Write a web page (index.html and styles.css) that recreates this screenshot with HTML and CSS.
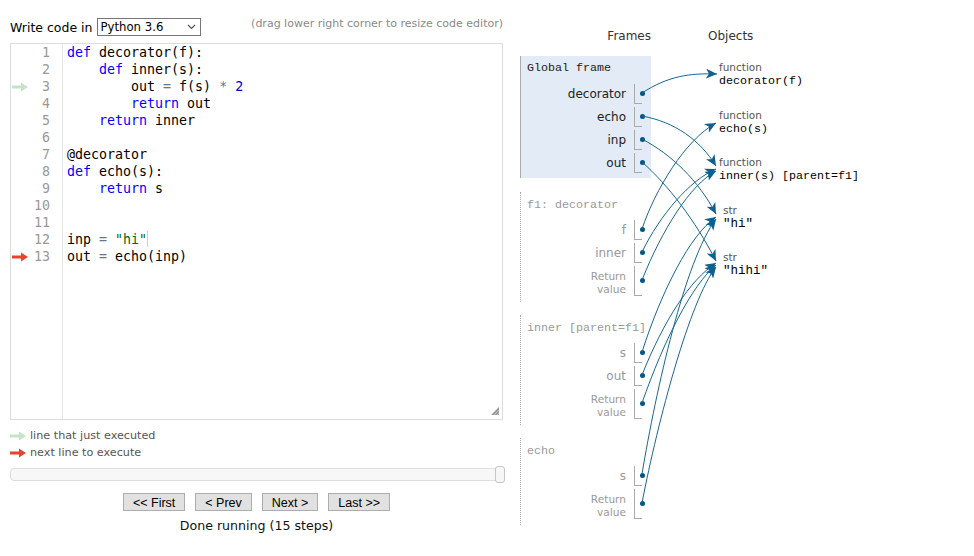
FILE: index.html
```html
<!DOCTYPE html>
<html>
<head>
<meta charset="utf-8">
<link rel="stylesheet" href="styles.css">
</head>
<body>
<div class="page">
  <div class="left">
    <div class="top-row">
      <div class="lang">
        <span>Write code in</span>
        <div class="select"><span>Python 3.6</span><svg class="chev" width="9" height="6" viewBox="0 0 9 6"><path d="M1 1 L4.5 4.5 L8 1" fill="none" stroke="#555" stroke-width="1.2"/></svg></div>
      </div>
      <span class="hint">(drag lower right corner to resize code editor)</span>
    </div>
    <div class="editor">
      <div class="gutter">
        <div class="gl"><span></span><span>1</span></div>
        <div class="gl"><span></span><span>2</span></div>
        <div class="gl"><svg class="arrow" width="16" height="10" viewBox="0 0 16 10"><rect x="0" y="3.5" width="9" height="3" fill="#c5e3c5"/><polygon points="9,0.5 16,5 9,9.5" fill="#c5e3c5"/></svg><span>3</span></div>
        <div class="gl"><span></span><span>4</span></div>
        <div class="gl"><span></span><span>5</span></div>
        <div class="gl"><span></span><span>6</span></div>
        <div class="gl"><span></span><span>7</span></div>
        <div class="gl"><span></span><span>8</span></div>
        <div class="gl"><span></span><span>9</span></div>
        <div class="gl"><span></span><span>10</span></div>
        <div class="gl"><span></span><span>11</span></div>
        <div class="gl"><span></span><span>12</span></div>
        <div class="gl"><svg class="arrow" width="16" height="10" viewBox="0 0 16 10"><rect x="0" y="3.5" width="9" height="3" fill="#e8432f"/><polygon points="9,0.5 16,5 9,9.5" fill="#e8432f"/></svg><span>13</span></div>
      </div>
      <div class="code"><div class="cl"><span class="kw">def</span> decorator(f):</div><div class="cl">    <span class="kw">def</span> inner(s):</div><div class="cl">        out <span class="op">=</span> f(s) <span class="op">*</span> <span class="num">2</span></div><div class="cl">        <span class="kw">return</span> out</div><div class="cl">    <span class="kw">return</span> inner</div><div class="cl"> </div><div class="cl">@decorator</div><div class="cl"><span class="kw">def</span> echo(s):</div><div class="cl">    <span class="kw">return</span> s</div><div class="cl"> </div><div class="cl"> </div><div class="cl">inp <span class="op">=</span> <span class="str">"hi"</span><span class="cursor"></span></div><div class="cl">out <span class="op">=</span> echo(inp)</div></div>
      <svg class="resize" width="8" height="8" viewBox="0 0 8 8"><polygon points="8,0 8,8 0,8" fill="#999"/><path d="M3 8 L8 3 M6 8 L8 6" stroke="#ccc" stroke-width="0.8"/></svg>
    </div>
    <div class="legend">
      <div class="leg-row"><svg width="16" height="10" viewBox="0 0 16 10"><rect x="0" y="3.5" width="9" height="3" fill="#c5e3c5"/><polygon points="9,0.5 16,5 9,9.5" fill="#c5e3c5"/></svg><span>line that just executed</span></div>
      <div class="leg-row"><svg width="16" height="10" viewBox="0 0 16 10"><rect x="0" y="3.5" width="9" height="3" fill="#e8432f"/><polygon points="9,0.5 16,5 9,9.5" fill="#e8432f"/></svg><span>next line to execute</span></div>
    </div>
    <div class="slider"><div class="handle"></div></div>
    <div class="buttons">
      <button class="btn">&lt;&lt; First</button>
      <button class="btn">&lt; Prev</button>
      <button class="btn">Next &gt;</button>
      <button class="btn">Last &gt;&gt;</button>
    </div>
    <div class="status">Done running (15 steps)</div>
  </div>

  <div class="right">
    <div class="viz-head"><span class="h-frames">Frames</span><span class="h-objects">Objects</span></div>
    <div class="viz">
      <div class="frames">
        <div class="frame global">
          <div class="ftitle">Global frame</div>
          <div class="var"><span class="vname">decorator</span><span class="vbox"></span></div>
          <div class="var"><span class="vname">echo</span><span class="vbox"></span></div>
          <div class="var"><span class="vname">inp</span><span class="vbox"></span></div>
          <div class="var"><span class="vname">out</span><span class="vbox"></span></div>
        </div>
        <div class="frame">
          <div class="ftitle">f1: decorator</div>
          <div class="var"><span class="vname">f</span><span class="vbox"></span></div>
          <div class="var"><span class="vname">inner</span><span class="vbox"></span></div>
          <div class="var"><span class="vname ret">Return<br>value</span><span class="vbox tall"></span></div>
        </div>
        <div class="frame">
          <div class="ftitle">inner [parent=f1]</div>
          <div class="var"><span class="vname">s</span><span class="vbox"></span></div>
          <div class="var"><span class="vname">out</span><span class="vbox"></span></div>
          <div class="var"><span class="vname ret">Return<br>value</span><span class="vbox tall"></span></div>
        </div>
        <div class="frame">
          <div class="ftitle">echo</div>
          <div class="var"><span class="vname">s</span><span class="vbox"></span></div>
          <div class="var"><span class="vname ret">Return<br>value</span><span class="vbox tall"></span></div>
        </div>
      </div>
      <div class="objects">
        <div class="obj fn"><div class="olabel">function</div><div class="oval">decorator(f)</div></div>
        <div class="obj fn gap21"><div class="olabel">function</div><div class="oval">echo(s)</div></div>
        <div class="obj fn gap20"><div class="olabel">function</div><div class="oval">inner(s) [parent=f1]</div></div>
        <div class="obj st gap21"><div class="olabel">str</div><div class="oval sval">"hi"</div></div>
        <div class="obj st gap20"><div class="olabel">str</div><div class="oval sval">"hihi"</div></div>
      </div>
    </div>
  </div>

  <svg class="arrows" width="974" height="556" viewBox="0 0 974 556">
    <defs>
      <marker id="ah" markerWidth="12" markerHeight="10" refX="11" refY="5" orient="auto" markerUnits="userSpaceOnUse">
        <path d="M0,0 L11,5 L0,10 L3,5 Z" fill="#0f5f8f"/>
      </marker>
    </defs>
    <g fill="none" stroke="#1a6593" stroke-width="1" marker-end="url(#ah)">
      <path d="M642,93 C668,76 690,73 717,74"/>
      <path d="M642,116 C675,122 700,140 716,166"/>
      <path d="M642,139 C672,155 698,180 716,214"/>
      <path d="M642,162 C668,185 695,220 716,261"/>
      <path d="M642,229 C655,190 685,140 716,123"/>
      <path d="M642,252 C660,215 690,180 716,169"/>
      <path d="M642,280 C662,230 690,185 716,171"/>
      <path d="M642,352 C662,290 690,235 716,217"/>
      <path d="M642,375 C664,320 690,280 716,263"/>
      <path d="M642,403 C664,340 692,285 716,265"/>
      <path d="M642,474 C656,390 685,260 716,219"/>
      <path d="M642,503 C658,420 690,300 716,267"/>
    </g>
  </svg>
</div>
</body>
</html>
```

FILE: styles.css
```css
body {
  margin: 0;
  font-family: "DejaVu Sans", Verdana, sans-serif;
  color: #000;
  background: #fff;
}

.page {
  position: relative;
  display: flex;
  width: 974px;
  height: 556px;
}

.left {
  flex: none;
  width: 495px;
  padding: 18px 0 0 10px;
}

.top-row {
  display: flex;
  justify-content: space-between;
  width: 493px;
  height: 18px;
}

.lang {
  display: flex;
  align-items: center;
  gap: 4px;
  font-size: 12.5px;
  padding-top: 1px;
}

.select {
  width: 104px;
  height: 18px;
  box-sizing: border-box;
  border: 1px solid #767676;
  display: flex;
  align-items: center;
  justify-content: space-between;
  padding: 0 4px 0 3px;
  font-size: 11.7px;
  background: #fff;
  margin-top: -1px;
}

.hint {
  font-size: 11px;
  line-height: 12px;
  color: #8a8a8a;
}

.editor {
  position: relative;
  margin-top: 7px;
  width: 493px;
  height: 377px;
  box-sizing: border-box;
  border: 1px solid #dcdcdc;
  display: flex;
  font-family: "DejaVu Sans Mono", monospace;
  font-size: 13.3px;
  line-height: 17px;
}

.gutter {
  flex: none;
  width: 52px;
  box-sizing: border-box;
  border-right: 1px solid #e6e6e6;
  padding: 0 12px 0 1px;
  color: #999;
}

.gl {
  display: flex;
  justify-content: space-between;
  align-items: center;
  height: 17px;
}

.code {
  padding-left: 4px;
  white-space: pre;
}

.cl {
  height: 17px;
}

.kw { color: #0000ff; }
.num { color: #0000cd; }
.str { color: #036a07; }
.op { color: #687687; }

.cursor {
  display: inline-block;
  width: 0;
  height: 16px;
  border-left: 1px solid #cfcfcf;
  vertical-align: top;
}

.resize {
  position: absolute;
  right: 3px;
  bottom: 4px;
}

.legend {
  margin-top: 7px;
  font-size: 11.2px;
  color: #555;
}

.leg-row {
  display: flex;
  align-items: center;
  gap: 4px;
  height: 17px;
}

.slider {
  position: relative;
  margin-top: 7px;
  height: 13px;
  box-sizing: border-box;
  border: 1px solid #dddddd;
  border-radius: 4px;
  background: #f7f7f7;
}

.handle {
  position: absolute;
  right: -1px;
  top: -3px;
  width: 10px;
  height: 17px;
  box-sizing: border-box;
  border: 1px solid #c5c5c5;
  border-radius: 3px;
  background: #f6f6f6;
}

.buttons {
  margin-top: 12px;
  width: 493px;
  display: flex;
  justify-content: center;
  gap: 10px;
}

.btn {
  font-family: "Liberation Sans", Arial, sans-serif;
  font-size: 12.5px;
  height: 18px;
  line-height: 16px;
  padding: 1px 9px 0;
  border: 1px solid #adadad;
  border-radius: 0;
  background: #e1e1e1;
  color: #000;
}

.status {
  margin-top: 7px;
  width: 493px;
  text-align: center;
  font-size: 12.6px;
  line-height: 15px;
  color: #111;
}

.right {
  flex: none;
  margin-left: 15px;
  padding-top: 29px;
}

.viz-head {
  display: flex;
  height: 14px;
  line-height: 14px;
  font-size: 12px;
  color: #333;
  margin-bottom: 13px;
}

.h-frames {
  width: 131px;
  text-align: right;
}

.h-objects {
  margin-left: 57px;
}

.viz {
  display: flex;
}

.frames {
  flex: none;
  width: 131px;
}

.frame {
  border-left: 1px dotted #aaa;
  padding: 6px 9px 6px 6px;
  margin-bottom: 13px;
  color: #999;
}

.frame.global {
  border-left: 1px solid #aaa;
  background: #e2ebf6;
  padding-top: 5px;
  padding-bottom: 5px;
  margin-bottom: 14px;
  color: #222;
}

.ftitle {
  font-family: "Liberation Mono", monospace;
  font-size: 11.67px;
  line-height: 14px;
  margin-bottom: 8px;
  white-space: nowrap;
}

.global .ftitle {
  margin-bottom: 9px;
}

.var {
  display: flex;
  justify-content: flex-end;
  align-items: center;
  margin-top: 3px;
}

.ftitle + .var {
  margin-top: 0;
}

.vname {
  padding-right: 8px;
  font-size: 12px;
  line-height: 14px;
  text-align: right;
}

.vname.ret {
  font-size: 10.6px;
  line-height: 13px;
  padding-top: 3px;
}

.vbox {
  position: relative;
  flex: none;
  width: 8px;
  height: 20px;
  box-sizing: border-box;
  border-left: 1px solid #aaa;
  border-bottom: 1px solid #aaa;
}

.vbox.tall {
  height: 30px;
}

.vbox::after {
  content: "";
  position: absolute;
  left: 5px;
  top: 50%;
  width: 5px;
  height: 5px;
  margin-top: -3px;
  border-radius: 50%;
  background: #005583;
}

.objects {
  margin-left: 66px;
  padding-top: 5px;
}

.obj.fn {
  padding-left: 2px;
}

.obj.st {
  padding-left: 6px;
}

.gap21 { margin-top: 21px; }
.gap20 { margin-top: 20px; }

.olabel {
  font-size: 10.5px;
  line-height: 12px;
  color: #555;
}

.oval {
  font-family: "Liberation Mono", monospace;
  font-size: 11.67px;
  line-height: 14px;
  padding-top: 1px;
  white-space: pre;
}

.oval.sval {
  font-size: 12.5px;
}

.arrows {
  position: absolute;
  left: 0;
  top: 0;
  pointer-events: none;
}
```
